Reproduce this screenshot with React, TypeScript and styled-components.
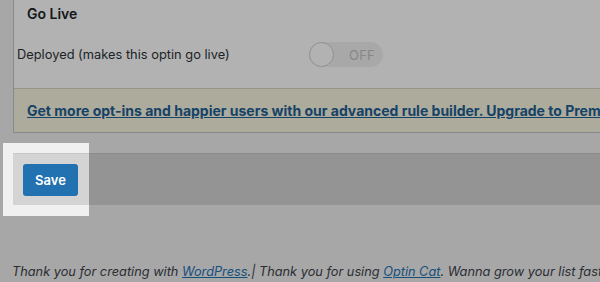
import React from "react";
import styled, { createGlobalStyle } from "styled-components";

const Global = createGlobalStyle`
  html, body { margin: 0; padding: 0; }
  body {
    background: #f0f0f1;
    font-family: Inter, "Liberation Sans", Arial, sans-serif;
    color: #1d2327;
    overflow: hidden;
  }
`;

const Page = styled.div`
  position: relative;
  width: 600px;
  height: 282px;
  overflow: hidden;
  background: #f0f0f1;
`;

const Panel = styled.div`
  margin-left: 13px;
  width: 700px;
  background: #ffffff;
  border: 1px solid #c3c4c7;
  border-top: none;
`;

const Heading = styled.h2`
  margin: 0;
  padding: 4px 0 0 13px;
  font-size: 14px;
  font-weight: 600;
  line-height: 20px;
  color: #1d2327;
`;

const Row = styled.div`
  display: grid;
  grid-template-columns: 292px auto;
  align-items: center;
  margin-top: 18px;
  padding-left: 3px;
  height: 25px;
`;

const Label = styled.span`
  font-size: 12.85px;
  color: #2c3338;
`;

const Toggle = styled.div`
  display: flex;
  align-items: center;
  width: 74px;
  height: 25px;
  border-radius: 13px;
  background: #f1f1f1;
`;

const Knob = styled.span`
  width: 23px;
  height: 23px;
  border-radius: 50%;
  border: 1px solid #d0d0d0;
  background: #ffffff;
  flex: none;
`;

const ToggleText = styled.span`
  margin-left: 15px;
  font-size: 13px;
  color: #c2c2c2;
  letter-spacing: 0.2px;
`;

const Notice = styled.div`
  margin-top: 21px;
  height: 43px;
  border-top: 1px solid #d8d6c6;
  background: #f8f5e0;
  display: flex;
  align-items: center;
  padding-left: 13px;
`;

const NoticeLink = styled.a`
  font-size: 14px;
  font-weight: 700;
  color: #1f5f94;
  text-decoration: underline;
  white-space: nowrap;
`;

const SaveBar = styled.div`
  position: relative;
  margin: 20px 0 0 13px;
  width: 700px;
  height: 52px;
  border-top: 1px solid #c8c8c8;
  background: #d4d4d4;
  display: flex;
  align-items: flex-start;
  padding: 10px 0 0 10px;
  box-sizing: border-box;
`;

const SaveButton = styled.button`
  width: 55px;
  height: 32px;
  border: none;
  border-radius: 3px;
  background: #2271b1;
  color: #ffffff;
  font-family: Inter, "Liberation Sans", Arial, sans-serif;
  font-size: 13px;
  font-weight: 600;
  cursor: pointer;
`;

const Spotlight = styled.div`
  position: absolute;
  left: -10px;
  top: -11px;
  width: 86px;
  height: 73px;
  box-shadow: 0 0 0 1200px rgba(0, 0, 0, 0.3);
  pointer-events: none;
  z-index: 5;
`;

const Footer = styled.p`
  margin: 57px 0 0 12px;
  font-size: 12.75px;
  line-height: 20px;
  font-style: italic;
  color: #3c434a;
  white-space: nowrap;
`;

const FooterLink = styled.a`
  color: #2271b1;
  text-decoration: underline;
`;

export default function App() {
  return (
    <Page>
      <Global />
      <Panel>
        <Heading>Go Live</Heading>
        <Row>
          <Label>Deployed (makes this optin go live)</Label>
          <Toggle>
            <Knob />
            <ToggleText>OFF</ToggleText>
          </Toggle>
        </Row>
        <Notice>
          <NoticeLink href="#">
            Get more opt-ins and happier users with our advanced rule builder. Upgrade to Premium!
          </NoticeLink>
        </Notice>
      </Panel>
      <SaveBar>
        <SaveButton>Save</SaveButton>
        <Spotlight />
      </SaveBar>
      <Footer>
        Thank you for creating with <FooterLink href="#">WordPress</FooterLink>.| Thank you for using{" "}
        <FooterLink href="#">Optin Cat</FooterLink>. Wanna grow your list faster? Upgrade now!
      </Footer>
    </Page>
  );
}
